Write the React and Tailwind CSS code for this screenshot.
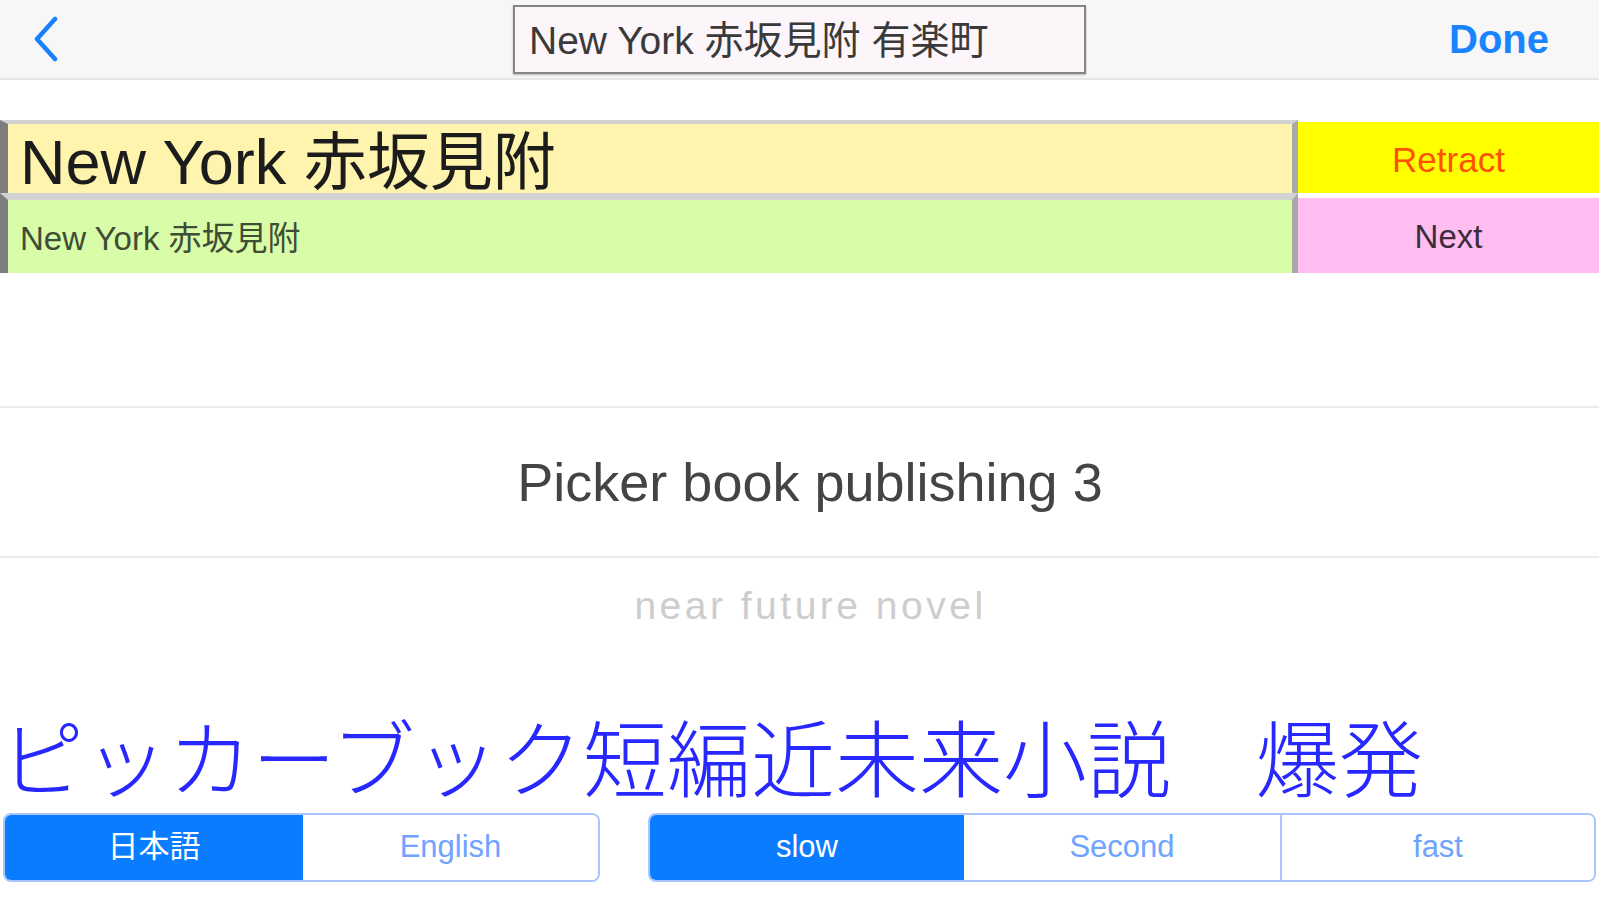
export default function App() {
  const font = { fontFamily: '"Liberation Sans", "Noto Sans CJK JP", sans-serif' };
  return (
    <div className="w-[1599px] h-[900px] bg-white overflow-hidden flex flex-col" style={font}>
      {/* Header */}
      <div className="h-[80px] shrink-0 bg-[#f7f7f7] border-b-[2px] border-[#e6e6e6] flex items-center">
        <div className="w-[513px] pl-[31px] flex items-center">
          <svg width="30" height="46" viewBox="0 0 30 46" fill="none">
            <path d="M24 3 L6 23 L24 43" stroke="#1a7ffb" strokeWidth="4.5" strokeLinecap="round" strokeLinejoin="round" />
          </svg>
        </div>
        <div className="w-[573px] h-[69px] border-[2px] border-[#858585] bg-[#fcf5fa] flex items-center pl-[14px] pt-[4px] text-[39px] text-[#3a3a3a] shadow-[0_1px_2px_rgba(0,0,0,0.25)] whitespace-nowrap">
          New York 赤坂見附 有楽町
        </div>
        <div className="flex-1 flex justify-end pr-[50px]">
          <span className="text-[40px] font-semibold text-[#1a84ff]">Done</span>
        </div>
      </div>

      {/* Rows */}
      <div className="mt-[40px] flex h-[73px]">
        <div className="flex-1 border-t-[4px] border-l-[8px] border-r-[6px] border-t-[#d2d2d2] border-l-[#7e7e7e] border-r-[#a9a9a9] bg-[#fff4ad] flex items-center pl-[12px] pt-[8px] text-[63px] text-[#1c1c1c] whitespace-nowrap leading-none">
          New York 赤坂見附
        </div>
        <div className="w-[301px] mt-[2px] pt-[5px] bg-[#ffff00] flex items-center justify-center text-[35px] text-[#ff5200]">
          Retract
        </div>
      </div>
      <div className="flex h-[80px]">
        <div className="flex-1 border-t-[7px] border-l-[8px] border-r-[6px] border-t-[#d2d2d2] border-l-[#7e7e7e] border-r-[#a9a9a9] bg-[#d8fca8] flex items-center pl-[12px] pt-[4px] text-[33px] text-[#3f4d35] whitespace-nowrap leading-none">
          New York 赤坂見附
        </div>
        <div className="w-[301px] mt-[5px] pt-[3px] bg-[#ffbdf0] flex items-center justify-center text-[33px] text-[#3b2b3b]">
          Next
        </div>
      </div>

      {/* Picker */}
      <div className="mt-[133px] h-[2px] bg-[#ececec]" />
      <div className="h-[148px] flex items-center justify-center pl-[21px] text-[54px] text-[#444444]">
        Picker book publishing 3
      </div>
      <div className="h-[2px] bg-[#ececec]" />
      <div className="h-[96px] flex items-center justify-center pl-[22px] text-[39px] tracking-[3.5px] text-[#cdcdcd]">
        near future novel
      </div>

      {/* Big blue text */}
      <div className="h-[155px] flex items-center pt-[46px] text-[84px] font-light text-[#2727ff] whitespace-nowrap leading-none" style={{ fontFamily: '"Noto Sans CJK JP", sans-serif' }}>
        ピッカーブック短編近未来小説　爆発
      </div>

      {/* Segmented controls */}
      <div className="flex mt-[4px] h-[69px]">
        <div className="ml-[3px] w-[597px] flex rounded-[8px] border-[2px] border-[#a9c5ff] overflow-hidden text-[31px]">
          <div className="w-[298px] bg-[#0a7cff] text-white flex items-center justify-center">日本語</div>
          <div className="flex-1 bg-white text-[#6fa3ff] flex items-center justify-center">English</div>
        </div>
        <div className="ml-[48px] w-[948px] flex rounded-[8px] border-[2px] border-[#a9c5ff] overflow-hidden text-[31px]">
          <div className="w-[314px] bg-[#0a7cff] text-white flex items-center justify-center">slow</div>
          <div className="w-[318px] bg-white text-[#6fa3ff] border-r-[2px] border-[#a9c5ff] flex items-center justify-center">Second</div>
          <div className="flex-1 bg-white text-[#6fa3ff] flex items-center justify-center">fast</div>
        </div>
      </div>
    </div>
  );
}
